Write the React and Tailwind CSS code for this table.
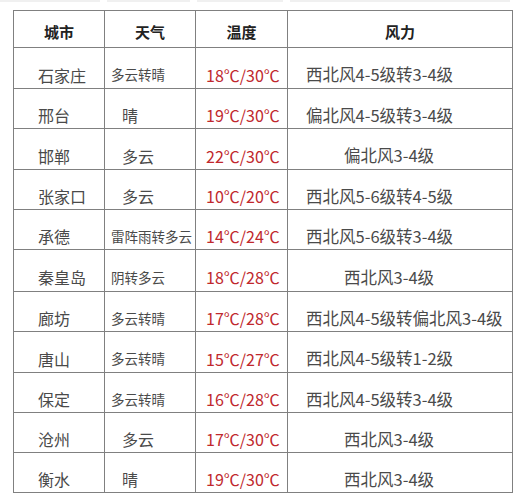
import React from "react";

const rows = [
  { h: "h-[41px]", city: "石家庄", w: "多云转晴", ws: true, t: "18℃/30℃", wind: "西北风4-5级转3-4级", short: false },
  { h: "h-[40px]", city: "邢台", w: "晴", ws: false, t: "19℃/30℃", wind: "偏北风4-5级转3-4级", short: false },
  { h: "h-[41px]", city: "邯郸", w: "多云", ws: false, t: "22℃/30℃", wind: "偏北风3-4级", short: true },
  { h: "h-[40px]", city: "张家口", w: "多云", ws: false, t: "10℃/20℃", wind: "西北风5-6级转4-5级", short: false },
  { h: "h-[40px]", city: "承德", w: "雷阵雨转多云", ws: true, t: "14℃/24℃", wind: "西北风5-6级转3-4级", short: false },
  { h: "h-[42px]", city: "秦皇岛", w: "阴转多云", ws: true, t: "18℃/28℃", wind: "西北风3-4级", short: true },
  { h: "h-[40px]", city: "廊坊", w: "多云转晴", ws: true, t: "17℃/28℃", wind: "西北风4-5级转偏北风3-4级", short: false },
  { h: "h-[41px]", city: "唐山", w: "多云转晴", ws: true, t: "15℃/27℃", wind: "西北风4-5级转1-2级", short: false },
  { h: "h-[40px]", city: "保定", w: "多云转晴", ws: true, t: "16℃/28℃", wind: "西北风4-5级转3-4级", short: false },
  { h: "h-[40px]", city: "沧州", w: "多云", ws: false, t: "17℃/30℃", wind: "西北风3-4级", short: true },
  { h: "h-[40px]", city: "衡水", w: "晴", ws: false, t: "19℃/30℃", wind: "西北风3-4级", short: true },
];

const font = { fontFamily: '"Noto Sans CJK SC", "Noto Sans", sans-serif' };

export default function App() {
  return (
    <div className="w-[523px] h-[500px] bg-white" style={font}>
      <div className="flex h-[2px] gap-[7px]">
        <div className="w-[100px] bg-[#f0f0f0]" />
        <div className="w-[83px] bg-[#f0f0f0]" />
        <div className="w-[86px] bg-[#f0f0f0]" />
        <div className="w-[220px] bg-[#f0f0f0]" />
      </div>
      <div className="ml-[13px] mt-[8px] w-fit border-r border-b border-[#808080]">
        <div className="grid grid-cols-[91px_91px_92px_225px]">
          <div className="h-[37px] border-l border-t border-[#808080] flex items-center justify-center pt-[7px] text-[15px] font-bold text-[#222]">城市</div>
          <div className="h-[37px] border-l border-t border-[#808080] flex items-center justify-center pt-[7px] text-[15px] font-bold text-[#222]">天气</div>
          <div className="h-[37px] border-l border-t border-[#808080] flex items-center justify-center pt-[7px] text-[15px] font-bold text-[#222]">温度</div>
          <div className="h-[37px] border-l border-t border-[#808080] flex items-center justify-center pt-[7px] text-[15px] font-bold text-[#222]">风力</div>
          {rows.map((r, i) => (
            <React.Fragment key={i}>
              <div className={`${r.h} border-l border-t border-[#808080] flex items-center pt-[13px] pl-[24px] text-[16px] text-[#4a4a4a] whitespace-nowrap`}>{r.city}</div>
              <div className={`${r.h} border-l border-t border-[#808080] flex items-center pt-[13px] whitespace-nowrap text-[#4a4a4a] ${r.ws ? "pl-[6px] text-[13.5px]" : "pl-[17px] text-[16px]"}`}>{r.w}</div>
              <div className={`${r.h} border-l border-t border-[#808080] flex items-center pt-[13px] pl-[10px] text-[16px] text-[#c0282d] whitespace-nowrap`}>{r.t}</div>
              <div className={`${r.h} border-l border-t border-[#808080] flex items-center pt-[13px] text-[16.5px] text-[#4a4a4a] whitespace-nowrap ${r.short ? "pl-[56px]" : "pl-[18px]"}`}>{r.wind}</div>
            </React.Fragment>
          ))}
        </div>
      </div>
    </div>
  );
}
